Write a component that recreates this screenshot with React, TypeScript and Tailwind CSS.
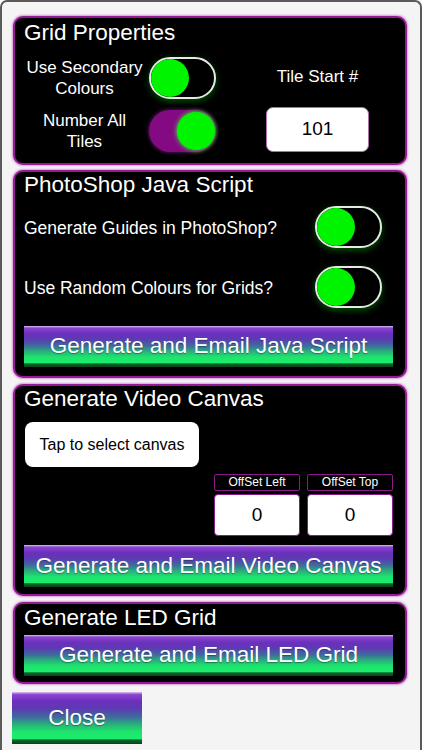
import React from 'react';

const btnBg =
  'bg-[linear-gradient(to_bottom,#dcc0f5_0%,#8a45d0_5%,#6c30bd_18%,#5d3ab2_32%,#3f6a9e_48%,#28b07a_62%,#1ee46c_76%,#1aee6c_90%,#0c6a2c_92%,#08401a_100%)]';

const Toggle: React.FC<{ on?: boolean }> = ({ on }) =>
  on ? (
    <div className="w-[67px] h-[42px] rounded-full bg-[#840a84] flex items-center justify-end pr-[1px] shadow-[0_0_4px_#7a1a7a]">
      <div className="w-[38px] h-[38px] rounded-full bg-[#00f400] shadow-[0_0_5px_#30ff30]" />
    </div>
  ) : (
    <div className="w-[67px] h-[42px] rounded-full bg-black border-2 border-[#e8e8e8] flex items-center shadow-[0_2px_6px_rgba(0,255,0,0.35)]">
      <div className="w-[38px] h-[38px] rounded-full bg-[#00f400]" />
    </div>
  );

const GlossButton: React.FC<{ label: string; className?: string }> = ({ label, className }) => (
  <button
    className={`${btnBg} text-white text-[22.5px] leading-none flex items-center justify-center [text-shadow:0_1px_1px_rgba(0,0,0,0.35)] ${className ?? ''}`}
  >
    {label}
  </button>
);

const Panel: React.FC<{ className?: string; children: React.ReactNode }> = ({ className, children }) => (
  <div
    className={`bg-black rounded-[10px] border-2 border-[#951a95] shadow-[0_0_2px_1px_#d79ad7] flex flex-col ${className ?? ''}`}
  >
    {children}
  </div>
);

const Title: React.FC<{ text: string; className?: string }> = ({ text, className }) => (
  <div className={`pl-[9px] text-white text-[22.5px] leading-[24px] ${className ?? ''}`}>{text}</div>
);

export default function App() {
  return (
    <div
      className="w-[422px] h-[750px] bg-[#f4f4f4] border-2 border-b-0 border-[#5a5a5a] rounded-t-[7px] pt-[14px] pl-[11px] pr-[13px] flex flex-col overflow-hidden"
      style={{ fontFamily: '"Liberation Sans", Arial, sans-serif' }}
    >
      {/* Grid Properties */}
      <Panel className="h-[149px]">
        <Title text="Grid Properties" className="pt-[3px]" />
        <div className="flex mt-[12px]">
          <div className="flex flex-col gap-[11px] ml-[5px]">
            <div className="flex items-center">
              <div className="w-[129px] text-center text-white text-[17px] leading-[21px]">
                Use Secondary
                <br />
                Colours
              </div>
              <Toggle />
            </div>
            <div className="flex items-center">
              <div className="w-[129px] text-center text-white text-[17px] leading-[21px]">
                Number All
                <br />
                Tiles
              </div>
              <Toggle on />
            </div>
          </div>
          <div className="flex flex-col items-center ml-[50px] w-[103px]">
            <div className="mt-[10px] h-[20px] leading-[20px] text-white text-[17px]">Tile Start #</div>
            <div className="mt-[20px] w-[103px] h-[45px] bg-white rounded-[7px] border border-[#b070b0] flex items-center justify-center text-black text-[19px]">
              101
            </div>
          </div>
        </div>
      </Panel>

      {/* PhotoShop Java Script */}
      <Panel className="h-[208px] mt-[5px]">
        <Title text="PhotoShop Java Script" className="pt-[1px]" />
        <div className="flex items-center justify-between pl-[9px] pr-[23px] mt-[9px]">
          <span className="text-white text-[17.5px] mt-[3px]">Generate Guides in PhotoShop?</span>
          <Toggle />
        </div>
        <div className="flex items-center justify-between pl-[9px] pr-[23px] mt-[18px]">
          <span className="text-white text-[17.5px] mt-[3px]">Use Random Colours for Grids?</span>
          <Toggle />
        </div>
        <GlossButton label="Generate and Email Java Script" className="ml-[9px] w-[369px] h-[41px] mt-[18px]" />
      </Panel>

      {/* Generate Video Canvas */}
      <Panel className="h-[212px] mt-[6px]">
        <Title text="Generate Video Canvas" className="pt-[1px]" />
        <div className="ml-[10px] mt-[11px] w-[174px] h-[45px] bg-white rounded-[8px] flex items-center justify-center text-black text-[16px]">
          Tap to select canvas
        </div>
        <div className="flex justify-end gap-[7px] mr-[12px] mt-[7px]">
          {['OffSet Left', 'OffSet Top'].map((l) => (
            <div key={l} className="flex flex-col w-[86px] gap-[3px]">
              <div className="h-[17px] border border-[#8a1a8a] rounded-[2px] text-white text-[12px] leading-[15px] text-center">
                {l}
              </div>
              <div className="h-[42px] bg-white border border-[#8a1a8a] rounded-[4px] flex items-center justify-center text-black text-[19px]">
                0
              </div>
            </div>
          ))}
        </div>
        <GlossButton label="Generate and Email Video Canvas" className="ml-[9px] w-[369px] h-[42px] mt-[9px]" />
      </Panel>

      {/* Generate LED Grid */}
      <Panel className="h-[82px] mt-[6px]">
        <Title text="Generate LED Grid" className="pt-[2px]" />
        <GlossButton label="Generate and Email LED Grid" className="ml-[9px] w-[369px] h-[41px] mt-[5px]" />
      </Panel>

      <GlossButton label="Close" className="mt-[8px] ml-[-1px] w-[130px] h-[52px]" />
    </div>
  );
}
